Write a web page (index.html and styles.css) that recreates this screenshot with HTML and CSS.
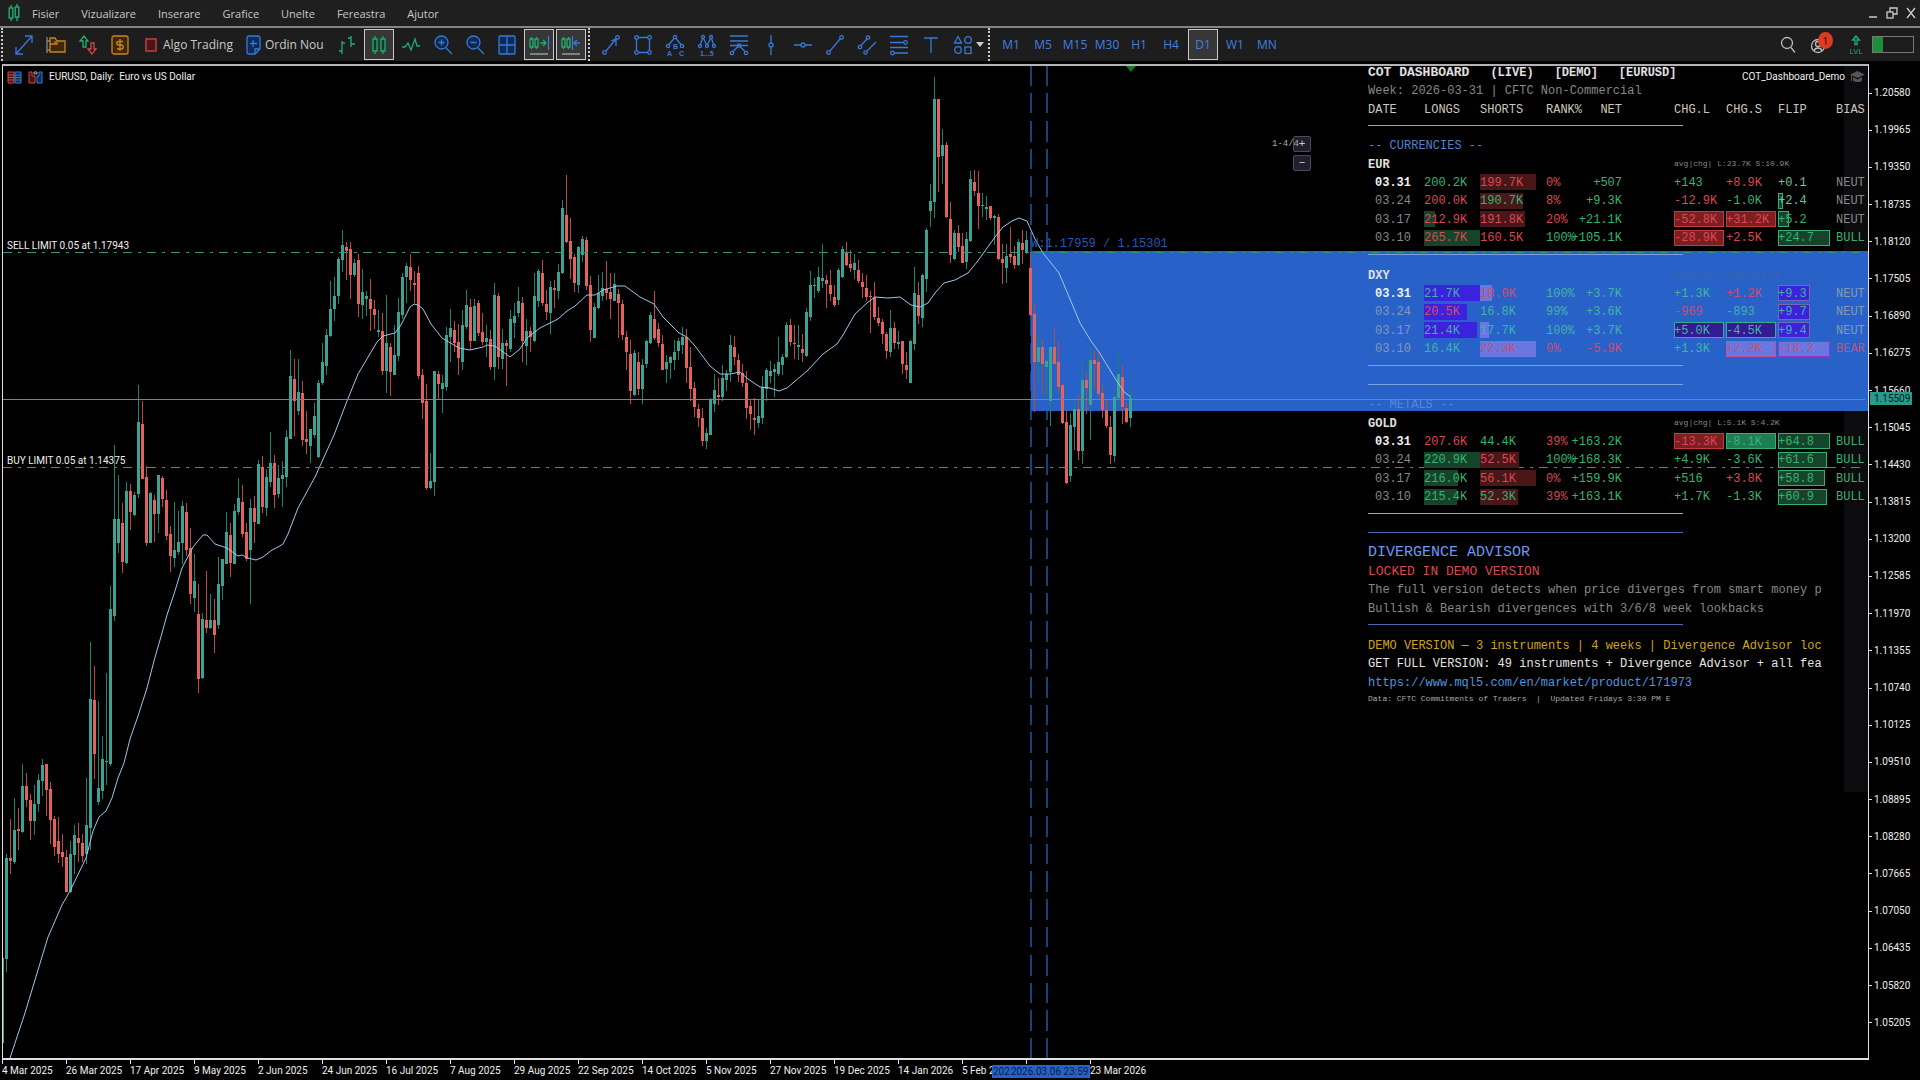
FILE: index.html
```html
<!DOCTYPE html>
<html lang="ro">
<head>
<meta charset="utf-8">
<title>EURUSD, Daily</title>
<link rel="stylesheet" href="styles.css">
</head>
<body>
<header class="menubar">
  <svg class="logo" width="12" height="18" viewBox="0 0 12 18" fill="none" stroke="#1fae70" stroke-width="1.4"><path d="M3 1v3M3 14v3M9 0v3M9 13v4"/><rect x="1.2" y="4" width="3.6" height="10"/><rect x="7.2" y="3" width="3.6" height="10"/></svg>
  <nav class="menu">
    <a href="#">Fisier</a><a href="#">Vizualizare</a><a href="#">Inserare</a><a href="#">Grafice</a><a href="#">Unelte</a><a href="#">Fereastra</a><a href="#">Ajutor</a>
  </nav>
  <div class="window-buttons">
    <button aria-label="Minimize"><svg width="10" height="12" viewBox="0 0 10 12" stroke="#ccc" stroke-width="1.5"><path d="M1 10h8"/></svg></button>
    <button aria-label="Restore"><svg width="12" height="12" viewBox="0 0 12 12" fill="none" stroke="#ccc" stroke-width="1.3"><rect x="1" y="5" width="6" height="6"/><path d="M4 5V1h7v6H7"/></svg></button>
    <button aria-label="Close"><svg width="10" height="12" viewBox="0 0 10 12" stroke="#ccc" stroke-width="1.3"><path d="M1 1l8 10M9 1L1 11"/></svg></button>
  </div>
</header>

<div class="toolbar">
  <div class="group">
    <button class="tool" aria-label="Cursor"><svg class="i" viewBox="0 0 18 20"><path d="M1 19L17 1M10 1h7v7M1 12v7h7"/></svg></button>
    <button class="tool" aria-label="Open"><svg class="i amber" viewBox="0 0 18 20"><path d="M0 2v16M0 6h3M0 15h3" stroke="#888"/><path class="f" d="M3 3h5l2 3h8v11H3zM8 9V6M3 9h7V6"/></svg></button>
    <button class="tool" aria-label="Symbols"><svg class="i" viewBox="0 0 18 20"><path stroke="#1fae70" d="M5 1L1 6h3v6h3V6h2z"/><path stroke="#d04848" d="M13 19l-4-5h3V8h3v6h2z"/></svg></button>
    <button class="tool" aria-label="Market"><svg class="i amber" viewBox="0 0 18 20"><rect class="f" x="1" y="1" width="16" height="18" rx="2"/><path d="M12 6.500H8c-3 0-3 3.500 0 3.500h2c3 0 3 4 0 4H6M9 4v12"/></svg></button>
    <button class="tool wide algo"><svg class="i" viewBox="0 0 18 20"><rect x="4" y="4" width="10" height="12" fill="#4a1515" stroke="#d04848"/></svg>Algo Trading</button>
    <button class="tool wide order"><svg class="i" viewBox="0 0 18 20"><path fill="#0e2a55" d="M5 1h9a2 2 0 0 1 2 2v11l-5 5H5a2 2 0 0 1-2-2V3a2 2 0 0 1 2-2z"/><path d="M16 14h-5v5M9 5v7M6 8.500h7"/></svg>Ordin Nou</button>
    <button class="tool" aria-label="Bar chart"><svg class="i green" viewBox="0 0 18 20"><path d="M4 6v13M1 16h3M4 8h3M13 1v11M10 3h3M13 9h4"/></svg></button>
    <button class="tool on" aria-label="Candles"><svg class="i green" viewBox="0 0 18 20"><path d="M5 1v3M5 16v3M13 1v3M13 16v3"/><path class="f" d="M3 4h4v12H3zM11 4h4v12h-4z"/></svg></button>
    <button class="tool" aria-label="Line chart"><svg class="i green" viewBox="0 0 18 20"><path d="M0 12h3l3-4 3 7 4-11 2 7h3"/></svg></button>
    <button class="tool" aria-label="Zoom in"><svg class="i" viewBox="0 0 18 20"><circle class="f" cx="7.500" cy="7.500" r="6.500"/><path d="M12 13l6 6M7.500 4.500v6M4.500 7.500h6"/></svg></button>
    <button class="tool" aria-label="Zoom out"><svg class="i" viewBox="0 0 18 20"><circle class="f" cx="7.500" cy="7.500" r="6.500"/><path d="M12 13l6 6M4.500 7.500h6"/></svg></button>
    <button class="tool" aria-label="Tile windows"><svg class="i" viewBox="0 0 18 20"><rect class="f" x="1" y="1" width="16" height="18" rx="1"/><path d="M9 1v18M1 10h16"/></svg></button>
    <button class="tool on" aria-label="Auto scroll"><svg class="i green" viewBox="0 0 18 20"><path d="M0 4h3v8H0zM5 4h3v8H5zM1.500 2v2M1.500 12v2M6.500 2v2M6.500 12v2M10 8h5M13 5l3 3-3 3"/><path stroke="#3878d8" d="M18.500 1v14"/><path stroke="#aaa" d="M0 19h18"/></svg></button>
    <button class="tool on" aria-label="Chart shift"><svg class="i green" viewBox="0 0 18 20"><path d="M0 4h3v8H0zM5 4h3v8H5zM1.500 2v2M1.500 12v2M6.500 2v2M6.500 12v2"/><path stroke="#3878d8" d="M10.500 1v14M18 8h-5M15 5l-3 3 3 3"/><path stroke="#aaa" d="M0 19h18"/></svg></button>
  </div>
  <div class="group">
    <button class="tool" aria-label="Arrow line"><svg class="i" viewBox="0 0 18 20"><circle cx="2.500" cy="17.500" r="1.800"/><circle cx="15.500" cy="2.500" r="1.800"/><path d="M4 16L14 4M9 6l5-2 0 7"/></svg></button>
    <button class="tool" aria-label="Rectangle"><svg class="i" viewBox="0 0 18 20"><path d="M4 2.500h10M4 17.500h10M2.500 4.500v11M15.500 4.500v11"/><circle cx="2.500" cy="2.500" r="1.800"/><circle cx="15.500" cy="2.500" r="1.800"/><circle cx="2.500" cy="17.500" r="1.800"/><circle cx="15.500" cy="17.500" r="1.800"/></svg></button>
    <button class="tool" aria-label="ABC pattern"><svg class="i" viewBox="0 0 18 20"><circle cx="9" cy="2" r="1.600"/><circle cx="2" cy="11" r="1.600"/><circle cx="16" cy="11" r="1.600"/><path d="M8 3.500L3 9.500M10 3.500l5 6"/><text x="7" y="14">B</text><text x="1" y="21">A</text><text x="13" y="21">C</text></svg></button>
    <button class="tool" aria-label="Elliott waves"><svg class="i" viewBox="0 0 18 20"><circle cx="5" cy="2" r="1.500"/><circle cx="13" cy="2" r="1.500"/><circle cx="2" cy="11" r="1.500"/><circle cx="9" cy="11" r="1.500"/><circle cx="16" cy="11" r="1.500"/><path d="M4.500 3.500L2.500 9.500M5.500 3.500L8.500 9.500M12.500 3.500L9.500 9.500M13.500 3.500l2 6"/><text x="2" y="21">1...5</text></svg></button>
    <button class="tool" aria-label="Fibonacci fan"><svg class="i" viewBox="0 0 18 20"><path d="M0 1h18M0 6h18M0 10.500h18M8 11.500l-5 5M10 11.500l5 5"/><circle cx="9" cy="10.500" r="1.600"/><circle cx="2" cy="18" r="1.700"/><circle cx="16" cy="18" r="1.700"/></svg></button>
    <button class="tool" aria-label="Vertical line"><svg class="i" viewBox="0 0 18 20"><path d="M9 0v8M9 12v8"/><circle cx="9" cy="10" r="2"/></svg></button>
    <button class="tool" aria-label="Horizontal line"><svg class="i" viewBox="0 0 18 20"><path d="M0 10h7M11 10h7"/><circle cx="9" cy="10" r="2"/></svg></button>
    <button class="tool" aria-label="Trend line"><svg class="i" viewBox="0 0 18 20"><circle cx="2.500" cy="17.500" r="1.800"/><circle cx="15.500" cy="2.500" r="1.800"/><path d="M4 16L14 4"/></svg></button>
    <button class="tool" aria-label="Channel"><svg class="i" viewBox="0 0 18 20"><circle cx="2" cy="12" r="1.700"/><circle cx="10" cy="2.500" r="1.700"/><circle cx="7.500" cy="17.500" r="1.700"/><path d="M3 10.500L9 4M9 16l9-9"/></svg></button>
    <button class="tool" aria-label="Fibonacci"><svg class="i" viewBox="0 0 18 20"><path d="M0 1.500h18M0 7.500h13M0 12.500h18M4 18h14"/><circle cx="15.500" cy="7.500" r="1.800"/><circle cx="2.500" cy="18" r="1.800"/></svg></button>
    <button class="tool" aria-label="Text"><svg class="i" viewBox="0 0 18 20"><path d="M3 4V3h12v1M9 3v15"/></svg></button>
    <button class="tool more" aria-label="Objects"><svg class="i" viewBox="0 0 18 20"><path d="M4 1.500L7.500 8h-7z"/><circle cx="14" cy="5" r="3.300"/><circle cx="4" cy="15" r="3.300"/><rect x="11" y="12" width="6" height="6.500"/></svg><span class="caret"></span></button>
  </div>
  <div class="group">
    <button class="tool">M1</button><button class="tool">M5</button><button class="tool">M15</button><button class="tool">M30</button><button class="tool">H1</button><button class="tool">H4</button><button class="tool on">D1</button><button class="tool">W1</button><button class="tool">MN</button>
  </div>
  <div class="status">
    <button class="tool" aria-label="Search"><svg class="i grey" viewBox="0 0 18 20"><circle cx="9" cy="8" r="5.500"/><path d="M13 12.500l4 5"/></svg></button>
    <button class="tool account" aria-label="Account"><svg class="i grey" viewBox="0 0 18 20"><circle cx="8" cy="11" r="6.500"/><circle cx="8" cy="9" r="2.500"/><path d="M4 16c1-4 7-4 8 0"/></svg><span class="badge">1</span></button>
    <button class="tool level"><svg width="10" height="11" viewBox="0 0 10 11" fill="none" stroke="#1fae70" stroke-width="1.300"><path d="M5 1L1.500 5H4v4.500h2V5h2.500z"/></svg>LVL</button>
    <span class="battery"></span>
  </div>
</div>

<main class="chart">
  <div class="plot">
    <svg class="canvas" width="100%" height="100%" aria-label="EURUSD Daily">
      <g transform="translate(-3,-66)">
        <path class="period" d="M1031 65V1058M1047 65V1058"/>
        <path d="M1126 66h10l-5 6z" fill="#117a11"/>
        <svg x="1031" y="251" width="100%" height="160"><rect width="100%" height="100%" fill="#2862c9"/></svg>
        <g id="candles"></g>
        <polyline id="average"/>
        <line class="order-line" x1="3" y1="252" x2="100%" y2="252"/>
        <line class="order-line" x1="3" y1="467" x2="100%" y2="467"/>
        <line class="price-line" x1="3" y1="399" x2="100%" y2="399"/>
        <text x="7" y="249">SELL LIMIT 0.05 at 1.17943</text>
        <text x="7" y="464">BUY LIMIT 0.05 at 1.14375</text>
        <text class="zone" x="1031" y="247">W:1.17959 / 1.15301</text>
      </g>
    </svg>
    <div class="caption">
      <svg width="15" height="13" viewBox="0 0 15 13" fill="none"><path stroke="#d04848" fill="#401515" d="M1 1h6v11H1z"/><path stroke="#3878d8" fill="#0e2a55" d="M8 1h6v11H8z"/><path stroke="#d04848" d="M1 4h6M1 6.500h6M1 9h6"/><path stroke="#3878d8" d="M8 4h6M8 6.500h6M8 9h6"/></svg>
      <svg width="15" height="13" viewBox="0 0 15 13" fill="none"><path stroke="#d04848" fill="#401515" d="M1 1h3v4h3v7H1z"/><path stroke="#3878d8" fill="#0e2a55" d="M14 1h-3v4H9v7h5z"/><path stroke="#aaa" d="M6 1h3v2H6z"/></svg>
      <span>EURUSD, Daily:&nbsp; Euro vs US Dollar</span>
    </div>
    <div class="pager"><span>1-4/4</span><div><button>+</button><button>−</button></div></div>

    <section class="dash">
      <div class="expert">COT_Dashboard_Demo <svg width="15" height="13" viewBox="0 0 15 13" fill="#555"><path d="M0 4.500L7.500 1 15 4.500 7.500 8zM3 7l4.500 2.500L12 7v3.500c-2 2-7 2-9 0zM1 5h1v6H1z"/></svg></div>
      <h1><span>COT DASHBOARD</span><span>(LIVE)</span><span>[DEMO]</span><span>[EURUSD]</span></h1>
      <p class="week">Week: 2026-03-31 | CFTC Non-Commercial</p>
      <table>
        <colgroup><col class="c56"><col class="c56"><col class="c66"><col class="c24"><col class="c104"><col class="c52"><col class="c52"><col class="c58"><col></colgroup>
        <thead><tr><th class="first">DATE</th><th>LONGS</th><th>SHORTS</th><th>RANK%</th><th class="net">NET</th><th>CHG.L</th><th>CHG.S</th><th>FLIP</th><th>BIAS</th></tr></thead>
        <tbody>
          <tr><td colspan="9"><hr></td></tr>
          <tr><td colspan="9" class="section">-- CURRENCIES --</td></tr>
          <tr><th colspan="5">EUR</th><td colspan="4" class="avg">avg|chg| L:23.7K S:10.9K</td></tr>
          <tr class="now"><td>03.31</td><td class="up">200.2K</td><td class="down"><i class="bear" style="width:56px"></i>199.7K</td><td class="down">0%</td><td class="net up">+507</td><td class="up">+143</td><td class="down">+8.9K</td><td class="up pale">+0.1</td><td>NEUT</td></tr>
          <tr><td>03.24</td><td class="down">200.0K</td><td class="up"><i class="bear" style="width:43px"></i>190.7K</td><td class="down">8%</td><td class="net up">+9.3K</td><td class="down">-12.9K</td><td class="up">-1.0K</td><td class="up pale"><i class="box bull" style="width:5px"></i>+2.4</td><td>NEUT</td></tr>
          <tr><td>03.17</td><td class="down"><i class="bull" style="width:11px"></i>212.9K</td><td class="down"><i class="bear" style="width:45px"></i>191.8K</td><td class="down">20%</td><td class="net up">+21.1K</td><td class="down"><i class="box bear" style="width:50px"></i>-52.8K</td><td class="down"><i class="box bear" style="width:50px"></i>+31.2K</td><td class="up"><i class="box bull" style="width:11px"></i>+5.2</td><td>NEUT</td></tr>
          <tr><td>03.10</td><td class="down"><i class="bull" style="width:56px"></i>265.7K</td><td class="down">160.5K</td><td class="up">100%</td><td class="net up">+105.1K</td><td class="down"><i class="box bear" style="width:50px"></i>-28.9K</td><td class="down">+2.5K</td><td class="up"><i class="box bull" style="width:52px"></i>+24.7</td><td class="up">BULL</td></tr>
          <tr class="alt"><td colspan="9"><hr></td></tr>
          <tr><th colspan="5">DXY</th><td colspan="4" class="avg dim">avg|chg| L:3.3K S:1.1K</td></tr>
          <tr class="now alt"><td>03.31</td><td class="up"><i class="indigo" style="width:56px"></i>21.7K</td><td class="down"><i class="lilac" style="width:12px"></i>18.0K</td><td class="up">100%</td><td class="net up">+3.7K</td><td class="up">+1.3K</td><td class="down">+1.2K</td><td class="up"><i class="box indigo" style="width:32px"></i>+9.3</td><td>NEUT</td></tr>
          <tr class="alt"><td>03.24</td><td class="down"><i class="indigo" style="width:43px"></i>20.5K</td><td class="up">16.8K</td><td class="up">99%</td><td class="net up">+3.6K</td><td class="down">-969</td><td class="up">-893</td><td class="up"><i class="box indigo" style="width:32px"></i>+9.7</td><td>NEUT</td></tr>
          <tr class="alt"><td>03.17</td><td class="up"><i class="indigo" style="width:53px"></i>21.4K</td><td class="up"><i class="lilac" style="width:9px"></i>17.7K</td><td class="up">100%</td><td class="net up">+3.7K</td><td class="up"><i class="box violet" style="width:50px"></i>+5.0K</td><td class="up"><i class="box violet" style="width:50px"></i>-4.5K</td><td class="up"><i class="box indigo" style="width:32px"></i>+9.4</td><td>NEUT</td></tr>
          <tr class="alt"><td>03.10</td><td class="up">16.4K</td><td class="down"><i class="lilac" style="width:56px"></i>22.3K</td><td class="down">0%</td><td class="net down">-5.9K</td><td class="up">+1.3K</td><td class="down"><i class="box lilac" style="width:50px"></i>+2.2K</td><td class="down"><i class="box lilac hot" style="width:52px"></i>-18.2</td><td class="down">BEAR</td></tr>
          <tr class="alt"><td colspan="9"><hr></td></tr>
          <tr class="alt"><td colspan="9"><hr></td></tr>
          <tr><td colspan="9" class="section light">-- METALS --</td></tr>
          <tr><th colspan="5">GOLD</th><td colspan="4" class="avg">avg|chg| L:5.1K S:4.2K</td></tr>
          <tr class="now"><td>03.31</td><td class="down">207.6K</td><td class="up">44.4K</td><td class="down">39%</td><td class="net up">+163.2K</td><td class="down"><i class="box bear" style="width:50px"></i>-13.3K</td><td class="up"><i class="box bull strong" style="width:50px"></i>-8.1K</td><td class="up"><i class="box bull" style="width:52px"></i>+64.8</td><td class="up">BULL</td></tr>
          <tr><td>03.24</td><td class="up"><i class="bull" style="width:56px"></i>220.9K</td><td class="down"><i class="bear" style="width:39px"></i>52.5K</td><td class="up">100%</td><td class="net up">+168.3K</td><td class="up">+4.9K</td><td class="up">-3.6K</td><td class="up"><i class="box bull" style="width:49px"></i>+61.6</td><td class="up">BULL</td></tr>
          <tr><td>03.17</td><td class="up"><i class="bull" style="width:34px"></i>216.0K</td><td class="down"><i class="bear" style="width:56px"></i>56.1K</td><td class="down">0%</td><td class="net up">+159.9K</td><td class="up">+516</td><td class="down">+3.8K</td><td class="up"><i class="box bull" style="width:47px"></i>+58.8</td><td class="up">BULL</td></tr>
          <tr><td>03.10</td><td class="up"><i class="bull" style="width:33px"></i>215.4K</td><td class="up"><i class="bear" style="width:38px"></i>52.3K</td><td class="down">39%</td><td class="net up">+163.1K</td><td class="up">+1.7K</td><td class="up">-1.3K</td><td class="up"><i class="box bull" style="width:49px"></i>+60.9</td><td class="up">BULL</td></tr>
          <tr><td colspan="9"><hr></td></tr>
        </tbody>
      </table>
      <div class="notes">
        <hr>
        <h2>DIVERGENCE ADVISOR</h2>
        <p class="locked">LOCKED IN DEMO VERSION</p>
        <p>The full version detects when price diverges from smart money p</p>
        <p>Bullish &amp; Bearish divergences with 3/6/8 week lookbacks</p>
        <hr>
        <p class="gold">DEMO VERSION — 3 instruments | 4 weeks | Divergence Advisor loc</p>
        <p class="white">GET FULL VERSION: 49 instruments + Divergence Advisor + all fea</p>
        <p><a href="https://www.mql5.com/en/market/product/171973">https://www.mql5.com/en/market/product/171973</a></p>
        <p class="source">Data: CFTC Commitments of Traders&nbsp; |&nbsp; Updated Fridays 3:30 PM E</p>
      </div>
    </section>
  </div>
  <div class="prices">
    <span>1.20580</span><span>1.19965</span><span>1.19350</span><span>1.18735</span><span>1.18120</span><span>1.17505</span><span>1.16890</span><span>1.16275</span><span>1.15660</span><span>1.15045</span><span>1.14430</span><span>1.13815</span><span>1.13200</span><span>1.12585</span><span>1.11970</span><span>1.11355</span><span>1.10740</span><span>1.10125</span><span>1.09510</span><span>1.08895</span><span>1.08280</span><span>1.07665</span><span>1.07050</span><span>1.06435</span><span>1.05820</span><span>1.05205</span>
    <b class="last">1.15509</b>
  </div>
</main>
<footer class="dates">
  <span>4 Mar 2025</span><span>26 Mar 2025</span><span>17 Apr 2025</span><span>9 May 2025</span><span>2 Jun 2025</span><span>24 Jun 2025</span><span>16 Jul 2025</span><span>7 Aug 2025</span><span>29 Aug 2025</span><span>22 Sep 2025</span><span>14 Oct 2025</span><span>5 Nov 2025</span><span>27 Nov 2025</span><span>19 Dec 2025</span><span>14 Jan 2026</span><span>5 Feb 2</span><span></span><span>23 Mar 2026</span>
  <div class="marks"><b>202</b><b>2026.03.06 23:59</b></div>
</footer>
<script src="chart.js"></script>
</body>
</html>
```
FILE: styles.css
```css
* { box-sizing: border-box; margin: 0; padding: 0; }
html, body { height: 100%; }
body {
  display: flex;
  flex-direction: column;
  background: #000;
  color: #c8c8c8;
  font: 12px "Open Sans", "Noto Sans", sans-serif;
  overflow: hidden;
}
button { border: 0; background: none; color: inherit; font: inherit; }
a { color: inherit; text-decoration: none; }

.menubar {
  display: flex;
  align-items: center;
  height: 28px;
  padding: 0 4px 0 8px;
  background: #1f1f1f;
  border-bottom: 2px solid #848484;
}
.menu { display: flex; gap: 22px; margin-left: 12px; font-size: 11px; }
.window-buttons { display: flex; gap: 8px; margin-left: auto; }
.window-buttons button { display: flex; }

.toolbar { display: flex; height: 33px; background: #1d1d1d; }
.group { display: flex; padding-left: 5px; margin-left: 1px; border-left: 2px dotted #ccc; }
.group + .group { margin-left: 1px; }
.tool {
  display: flex;
  align-items: center;
  justify-content: center;
  width: 32px;
  color: #3f80e0;
  border: 1px solid transparent;
}
.tool.on { background: #363636; border-color: #c8c8c8; width: 30px; margin: 1px; }
.tool.wide { justify-content: flex-start; gap: 3px; padding-left: 5px; color: #c8c8c8; white-space: nowrap; }
.tool.algo { width: 102px; }
.tool.order { width: 93px; }
.tool.more { width: 40px; justify-content: flex-start; gap: 4px; padding-left: 6px; }
.i { width: 18px; height: 20px; fill: none; stroke: #3878d8; stroke-width: 1.3; flex: none; overflow: visible; }
.i .f { fill: #0e2a55; }
.i.amber { stroke: #c88428; }
.i.amber .f { fill: #3e2808; }
.i.green { stroke: #1fae70; }
.i.green .f { fill: #0d3a28; }
.i.grey { stroke: #bbb; }
.i text { font: bold 7px "Liberation Sans", sans-serif; fill: #3878d8; stroke: none; }
.caret { border: 4px solid transparent; border-top: 5px solid #ccc; border-bottom: 0; }
.status { display: flex; align-items: center; margin-left: auto; padding-right: 6px; }
.status .tool { height: 33px; position: relative; }
.badge {
  position: absolute;
  left: 14px;
  top: 3px;
  width: 15px;
  height: 17px;
  border-radius: 50%;
  background: #dc3c24;
  color: #3a0c08;
  font-size: 11px;
  line-height: 17px;
}
.tool.level { flex-direction: column; width: 30px; margin-left: 6px; color: #1fae70; font-size: 8px; line-height: 9px; }
.battery { width: 42px; height: 17px; margin-left: 1px; border: 1px solid #777; background: linear-gradient(90deg, #1c9038 10px, transparent 10px); }

.chart { flex: 1; display: flex; margin: 3px 0 0 2px; min-height: 0; font: 10px Roboto, sans-serif; color: #f0f0f0; }
.plot {
  position: relative;
  flex: 1;
  border: 1px solid #e0e0e0;
  border-top: 2px solid #b4b4b4;
  border-bottom-width: 2px;
  overflow: hidden;
  background: linear-gradient(#0c0c0f, #0c0c0f) right top / 24px 726px no-repeat;
}
.canvas { position: absolute; inset: 0; }
.canvas text { fill: #f0f0f0; }
.canvas .zone { font: 12px "Liberation Mono", monospace; fill: #2458b0; }
.period { stroke: #1b4080; stroke-width: 2; stroke-dasharray: 21 7 20 8 21 7 20 7 21 7; }
.order-line { stroke: #2f987f; stroke-width: 1; stroke-dasharray: 9 6 3 6; shape-rendering: crispEdges; }
.price-line { stroke: #2fa698; stroke-width: 1; shape-rendering: crispEdges; }
#average { fill: none; stroke: #9cc8ec; stroke-width: 1; }
.up-wick { fill: #23806f; }
.up-body { fill: #3ba294; }
.down-wick { fill: #b84a46; }
.down-body { fill: #e4625c; }

.caption { position: absolute; left: 4px; top: 4px; display: flex; gap: 6px; align-items: center; line-height: 14px; }
.pager { position: absolute; right: 557px; top: 70px; display: flex; font: 9px/16px "Liberation Mono", monospace; color: #aaa; }
.pager span { margin-right: -6px; position: relative; z-index: 1; }
.pager div { display: flex; flex-direction: column; gap: 3px; }
.pager button { width: 18px; height: 16px; border: 1px solid #4a4a5a; border-radius: 2px; background: #20202c; color: #ccc; font-size: 11px; line-height: 12px; }

.dash { position: absolute; top: 0; right: 0; width: 500px; font: 12px/18px "Liberation Mono", monospace; color: #888; white-space: nowrap; }
.expert { position: absolute; right: 3px; top: 4px; display: flex; gap: 5px; font: 10px/14px Roboto, sans-serif; color: #f0f0f0; }
.dash h1 { display: flex; gap: 21px; height: 15px; font: bold 12px/14px "Liberation Mono", monospace; color: #e0e0e0; }
.dash h1 span:first-child { font-size: 13px; }
.week { height: 18px; line-height: 20px; }
table { table-layout: fixed; width: 100%; border-collapse: collapse; }
.c24 { width: 24px; } .c52 { width: 52px; } .c56 { width: 56px; } .c58 { width: 58px; } .c66 { width: 66px; } .c104 { width: 104px; }
thead tr, tbody tr:nth-child(even) { height: 19px; }
tbody tr:nth-child(odd) { height: 18px; }
td, th { position: relative; z-index: 0; text-align: left; line-height: 16px; }
th { padding-top: 2px; }
thead th { font-weight: normal; color: #ccc8c0; }
tbody th { color: #e0e0e0; }
tbody td:first-child:not([colspan]) { padding-left: 7px; }
td.net, th.net { text-align: right; padding-right: 52px; }
td.up { color: #34b472; }
td.up.pale { color: #6cc498; }
td.down { color: #dc4850; }
.alt td { color: #8498b4; }
.alt td.up { color: #40b4a4; }
.alt td.down { color: #d04c70; }
.now td:first-child { color: #f0f0f0; font-weight: bold; }
td.section { color: #5480cc; }
td.section.light { color: #5a88d4; }
td.avg { font-size: 8px; color: #888; }
td.avg.dim { color: #44649c; }
td i { position: absolute; z-index: -1; left: 0; top: 1px; height: 16px; }
.bear { background: #4a1719; }
.bull { background: #15442a; }
.indigo { background: #3c22dc; }
.lilac { background: #6878e0; }
.violet { background: #361a94; }
.box { border: 1px solid; }
.box.bear { background: #7c1f22; border-color: #c03c3c; }
.box.bull { border-color: #34b074; }
.box.strong { background: #1f7c52; }
.box.indigo { border-color: #7468b4; }
.box.violet { border-color: #34b090; }
.box.lilac { border-color: #c050a0; }
.box.hot { border-color: #a030c8; }
hr { width: 315px; height: 1px; margin-bottom: 4px; border: 0; background: #a8a8a8; }
.alt hr { background: #7ea0dc; }
.notes p, .notes h2, .notes hr { height: 19px; line-height: 20px; }
.notes > :nth-child(odd) { height: 18px; }
.notes hr { margin: 0; background: linear-gradient(#4868b8, #4868b8) 0 7px / 100% 1px no-repeat; }
.notes h2 { font-size: 15px; font-weight: normal; color: #6c98f8; }
.notes .locked { font-size: 13px; color: #dc4850; }
.notes .gold { color: #d0a41c; }
.notes .white { color: #e4e4e4; }
.notes a { color: #4a98e0; }
.notes .source { font-size: 8px; line-height: 16px; color: #aaa; }

.prices { position: relative; width: 51px; display: flex; flex-direction: column; justify-content: space-between; padding: 22px 0 30px; line-height: 14px; }
.prices span { display: flex; align-items: center; }
.prices span::before { content: ""; width: 3px; height: 1px; margin-right: 2px; background: #e0e0e0; }
.last { position: absolute; left: 1px; top: 328px; padding: 0 2px 0 4px; background: #2a9a8c; color: #04201c; font-weight: normal; line-height: 13px; }
.dates { position: relative; display: flex; height: 20px; padding-left: 2px; font: 10px/14px Roboto, sans-serif; color: #f0f0f0; white-space: nowrap; }
.dates span { position: relative; flex: none; width: 64px; padding-top: 4px; }
.dates span::before { content: ""; position: absolute; left: 0; top: 0; width: 1px; height: 4px; background: #e0e0e0; }
.marks { position: absolute; left: 992px; top: 5px; display: flex; gap: 1px; padding: 0 1px; background: #2862c9; color: #0a1c40; line-height: 13px; }
.marks b { font-weight: normal; }
```
FILE: chart.js
```js
// One entry per day: direction, then high, low, body top and body bottom.
const days = `G958 1043 958 1043,G854 972 858 959,R819 874 858 861,G798 864 830 862,R808 850 829 831,G764 833 786 832,R773 807 786 800,R794 840 800 821,G785 835 804 821,G774 812 780 804,
G759 796 765 781,R764 816 764 790,R782 844 789 820,R816 856 819 847,R817 863 841 854,R834 867 852 857,R850 892 857 892,G841 893 854 892,G825 874 835 855,R823 862 838 843,
R834 862 843 856,G778 864 825 854,G642 850 699 828,R666 779 700 754,G701 805 788 802,G736 799 759 791,G673 785 761 762,G586 766 609 764,G445 621 519 616,G475 553 519 543,
R503 573 523 562,G482 564 491 563,R484 530 491 512,G492 516 495 515,G385 498 422 494,R401 479 424 479,R466 546 477 543,G492 543 493 543,R495 542 500 514,G475 533 475 514,
R476 507 478 499,R490 540 500 536,R526 572 534 556,G502 567 550 558,G511 555 542 552,G501 564 506 543,R503 556 512 550,R528 604 548 594,G554 612 581 598,R584 693 614 679,
G613 679 619 678,R571 633 620 628,G594 629 620 628,R599 653 620 635,G557 629 584 625,G559 600 559 586,G512 564 532 564,R523 577 535 563,G504 564 511 564,G478 515 498 512,
R485 537 502 534,R523 561 532 559,G499 604 508 550,R496 543 508 522,G460 524 464 524,R456 513 467 507,G469 516 477 508,G432 487 463 482,R455 508 463 495,G465 498 478 494,
G461 507 475 479,G430 487 437 477,G350 439 376 439,R359 436 379 401,G359 415 392 411,R381 446 393 440,R411 454 439 442,G429 463 429 446,G403 438 416 435,G380 458 383 457,
G343 385 362 383,G329 375 335 366,G281 337 309 336,G277 321 296 309,G257 304 259 296,G230 272 245 260,R242 280 247 251,R242 299 249 275,G259 277 263 275,R254 317 260 304,
G269 319 292 305,G291 316 296 299,R279 331 299 309,R300 329 309 315,G310 337 330 332,R313 375 331 371,G295 393 343 371,R343 396 347 372,G325 375 355 375,G298 361 312 356,
G273 319 277 315,G263 303 266 277,R254 291 267 280,R271 303 283 285,R266 379 273 376,R369 419 375 403,R384 490 401 488,G453 489 481 488,G371 496 371 482,R371 399 374 384,
G375 413 383 389,G327 391 335 387,G309 362 328 337,R321 352 330 343,R324 375 342 358,G310 370 325 362,G290 329 305 327,R299 350 307 341,G299 341 306 341,R300 336 303 333,
R313 345 332 342,G325 357 338 342,R330 370 339 367,G283 380 295 367,R293 369 296 357,G329 369 343 359,R340 386 343 346,G310 352 319 349,G303 338 316 323,G287 317 301 313,
R297 362 303 341,G319 365 331 346,R327 352 331 337,G273 342 296 341,G269 307 271 301,R260 306 273 303,R290 320 304 312,G281 334 287 313,R280 308 288 290,G264 299 272 291,
G200 274 208 273,R175 243 215 242,R218 279 241 259,R254 292 257 283,G246 293 247 285,G236 262 239 255,R237 290 240 286,R276 342 285 330,G303 338 307 338,G275 309 293 308,
G272 301 288 296,R261 300 289 293,R273 319 292 299,G273 301 284 301,R289 338 294 303,R300 340 304 335,R331 370 337 352,R340 404 354 391,G350 396 353 395,R352 395 362 389,
G359 404 365 389,G340 368 341 364,G312 344 315 343,R291 340 319 338,R323 347 329 343,R335 370 344 370,G355 383 362 369,G356 379 357 363,G340 370 352 360,G338 360 341 351,
G327 354 337 345,R329 383 337 368,R347 401 367 389,R382 417 388 407,R404 427 409 418,R408 446 418 441,G428 449 433 441,G398 435 399 435,G374 412 390 404,R378 405 395 397,
G365 401 378 397,G370 391 374 380,G335 382 345 372,R336 365 347 357,R354 382 360 375,R364 387 373 383,R371 419 383 408,R399 430 406 414,R398 435 418 420,G399 428 416 423,
G376 424 387 418,G368 401 370 389,G361 383 371 376,G364 397 369 372,G337 376 362 374,G354 375 357 365,G322 358 325 357,R319 346 325 342,R325 359 343 344,G325 360 345 347,
R334 362 349 353,G308 357 312 356,G271 321 285 317,G278 298 285 286,G267 293 277 291,G244 288 278 281,R275 308 280 284,R270 301 285 294,R285 307 297 305,G268 305 270 300,
G246 278 249 277,R242 266 252 265,R250 272 264 268,G254 279 263 270,R260 283 270 281,R273 298 282 287,R275 301 288 297,R291 333 296 297,R282 320 297 317,R307 326 318 323,
R319 344 322 334,R332 359 334 351,G310 357 328 352,R322 349 328 343,G331 349 342 344,R341 374 341 364,R352 379 365 370,G340 383 341 383,G267 350 293 344,R282 324 295 316,
G274 327 275 318,G228 292 230 279,G184 227 201 211,G77 218 99 202,R99 192 99 157,G129 184 145 156,R142 218 145 217,R202 263 219 255,G230 260 233 259,R225 252 233 247,
R233 263 246 263,G232 269 239 262,G171 242 179 241,R170 196 182 191,R171 229 193 206,G193 217 205 206,G196 220 207 209,R206 220 206 218,G215 245 216 218,R214 260 217 259,
R244 284 259 263,G244 283 256 268,R227 263 254 257,R246 269 256 265,G239 266 242 265,R230 264 243 250,G231 254 240 253,R252 316 268 315,R304 412 314 362,G335 384 347 362,
R340 394 347 364,G360 397 361 367,G346 426 347 401,R328 365 347 364,R341 393 362 387,R384 424 385 423,R411 484 422 483,G413 482 425 476,G400 450 409 427,R395 460 409 451,
G360 464 380 451,R372 414 380 388,G346 440 360 405,R351 389 360 364,R353 397 362 394,R385 418 393 410,R399 428 410 426,R416 464 427 455,G391 462 397 456,G352 407 374 398,
R365 424 377 407,R403 423 408 422,G387 427 398 418`.split(',');

const average = `10,1058 25,1013 48,937 62,905 70,891 86,858 93,831 99,817 106,811 112,798 118,778 124,763 130,739 138,716 147,688 154,661 162,633 167,615 174,594 182,568 193,547 203,535 207,535 215,544 227,548 238,556 242,555 248,558 256,560 263,557 272,550 278,547 283,544 288,534 298,508 315,477 334,435 347,401 358,374 377,342 383,336 395,333 401,325 410,307 414,304 418,305 423,309 431,324 442,338 459,348 470,350 483,347 487,345 495,346 510,357 520,349 527,338 540,328 558,319 567,311 575,306 587,295 595,295 603,290 617,286 625,286 640,297 654,304 663,317 679,333 687,337 695,346 710,366 720,374 730,374 740,372 748,379 760,387 770,388 779,391 787,388 807,371 823,354 837,344 843,335 855,314 867,303 875,297 888,298 900,297 911,305 920,307 928,303 935,293 944,283 955,280 968,273 977,262 995,237 1003,227 1012,221 1019,218 1027,221 1035,239 1043,253 1059,273 1067,292 1080,323 1091,341 1099,352 1113,375 1124,392 1131,397`;

const layer = document.getElementById('candles');

function bar(x, width, top, bottom, name) {
  const rect = document.createElementNS('http://www.w3.org/2000/svg', 'rect');
  rect.setAttribute('x', x);
  rect.setAttribute('y', top);
  rect.setAttribute('width', width);
  rect.setAttribute('height', Math.max(1, bottom - top));
  rect.setAttribute('class', name);
  layer.append(rect);
}

days.forEach((entry, i) => {
  const day = entry.trim();
  const side = day[0] === 'G' ? 'up' : 'down';
  const [high, low, top, bottom] = day.slice(1).split(' ').map(Number);
  bar(2 + 4 * i, 1, high, low, side + '-wick');
  bar(1 + 4 * i, 3, top, bottom, side + '-body');
});
document.getElementById('average').setAttribute('points', average);
```
